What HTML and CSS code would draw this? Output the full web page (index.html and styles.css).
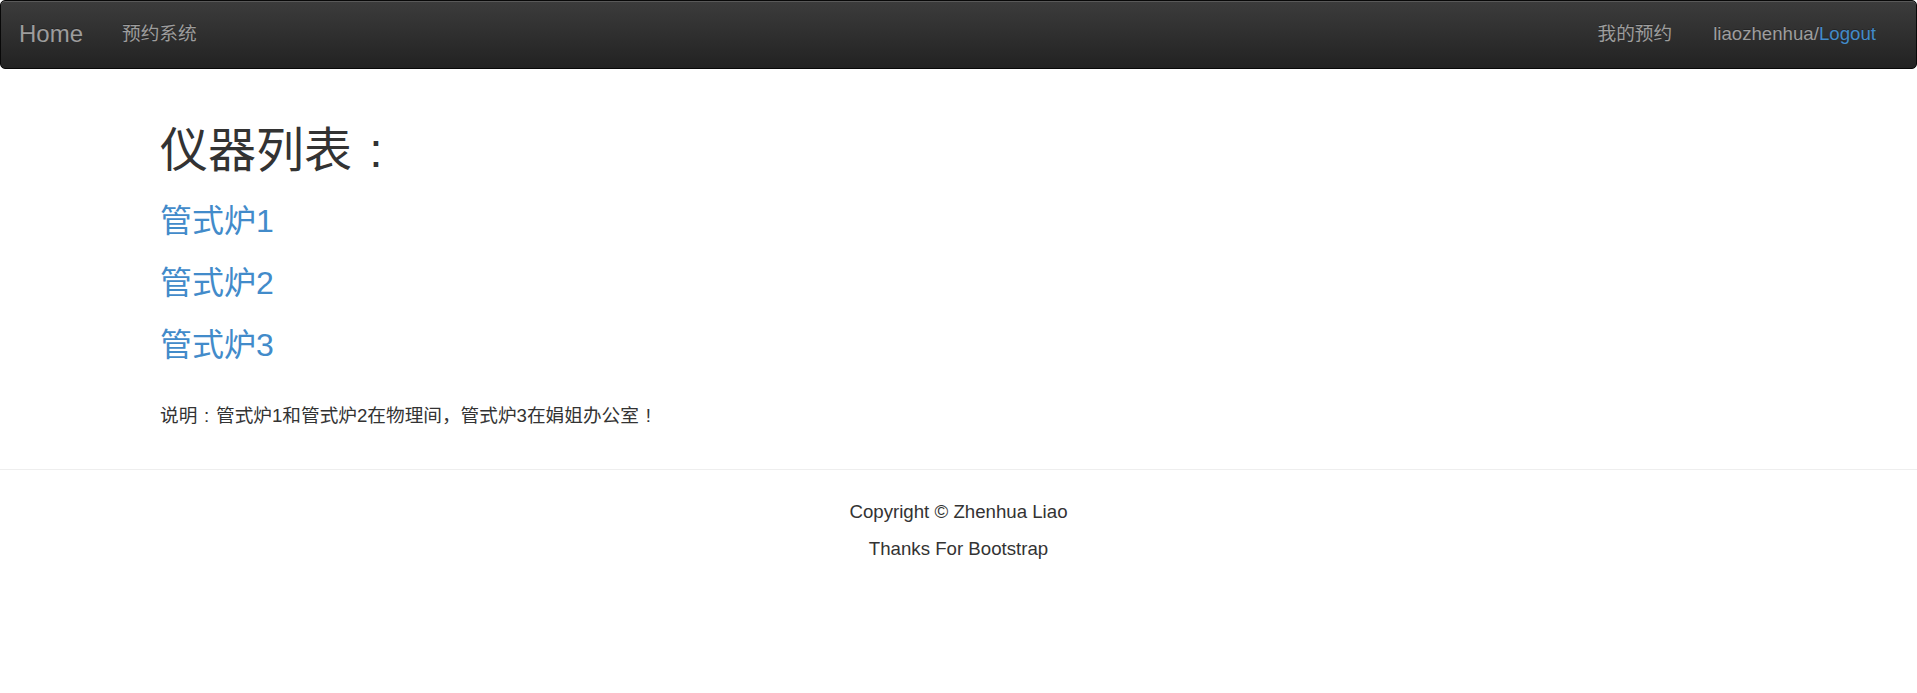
FILE: index.html
```html
<!DOCTYPE html>
<html lang="zh-CN">
<head>
<meta charset="utf-8">
<title>预约系统</title>
<link rel="stylesheet" href="styles.css">
</head>
<body>
<nav class="navbar">
  <div class="nav-left">
    <a class="brand" href="#">Home</a>
    <a class="nav-link" href="#">预约系统</a>
  </div>
  <div class="nav-right">
    <a class="nav-link" href="#">我的预约</a>
    <span class="nav-user">liaozhenhua/<a class="logout" href="#">Logout</a></span>
  </div>
</nav>
<main class="container">
  <h1 class="title">仪器列表<span class="punct">:</span></h1>
  <h3 class="item first"><a href="#">管式炉1</a></h3>
  <h3 class="item"><a href="#">管式炉2</a></h3>
  <h3 class="item"><a href="#">管式炉3</a></h3>
  <p class="note">说明<span class="punct">:</span>管式炉1和管式炉2在物理间，管式炉3在娟姐办公室<span class="punct">!</span></p>
</main>
<hr class="divider">
<footer class="footer">
  <p>Copyright © Zhenhua Liao</p>
  <p>Thanks For Bootstrap</p>
</footer>
</body>
</html>
```
FILE: styles.css
```css
html, body {
  margin: 0;
  padding: 0;
  background: #fff;
}
body {
  font-family: "Liberation Sans", Arial, "Noto Sans CJK SC", sans-serif;
  font-size: 18.67px;
  line-height: 26.67px;
  color: #333;
}
a {
  text-decoration: none;
  color: #428bca;
}
.punct {
  display: inline-block;
  width: 1em;
  text-align: center;
}
.navbar {
  display: flex;
  justify-content: space-between;
  align-items: center;
  height: 67px;
  border: 1px solid #080808;
  border-radius: 5px;
  background: linear-gradient(to bottom, #3c3c3c 0, #222 100%);
  box-shadow: inset 0 1px 0 rgba(255,255,255,.15);
  margin-bottom: 27px;
}
.nav-left, .nav-right {
  display: flex;
  align-items: center;
}
.brand {
  color: #9d9d9d;
  font-size: 24px;
  padding: 0 18px;
  text-shadow: 0 -1px 0 rgba(0,0,0,.25);
}
.nav-link {
  color: #9d9d9d;
  padding: 0 19px;
  text-shadow: 0 -1px 0 rgba(0,0,0,.25);
}
.nav-left .nav-link {
  padding-left: 21px;
}
.nav-user {
  color: #9d9d9d;
  padding: 0 40px 0 22px;
  text-shadow: 0 -1px 0 rgba(0,0,0,.25);
}
.nav-user .logout {
  color: #428bca;
}
.container {
  padding: 0 160px;
}
.title {
  font-size: 48px;
  font-weight: 400;
  line-height: 1.1;
  margin: 56px 0 13px;
  color: #333;
}
.item {
  font-size: 32px;
  font-weight: 400;
  line-height: 1.1;
  margin: 27px 0 0;
}
.item.first {
  margin-top: 26px;
}
.note {
  margin: 40px 0 13px;
}
.divider {
  border: 0;
  border-top: 1px solid #eee;
  margin: 39px 0 0;
}
.footer {
  text-align: center;
  padding-top: 29px;
}
.footer p {
  margin: 0 0 10.5px;
}
```
